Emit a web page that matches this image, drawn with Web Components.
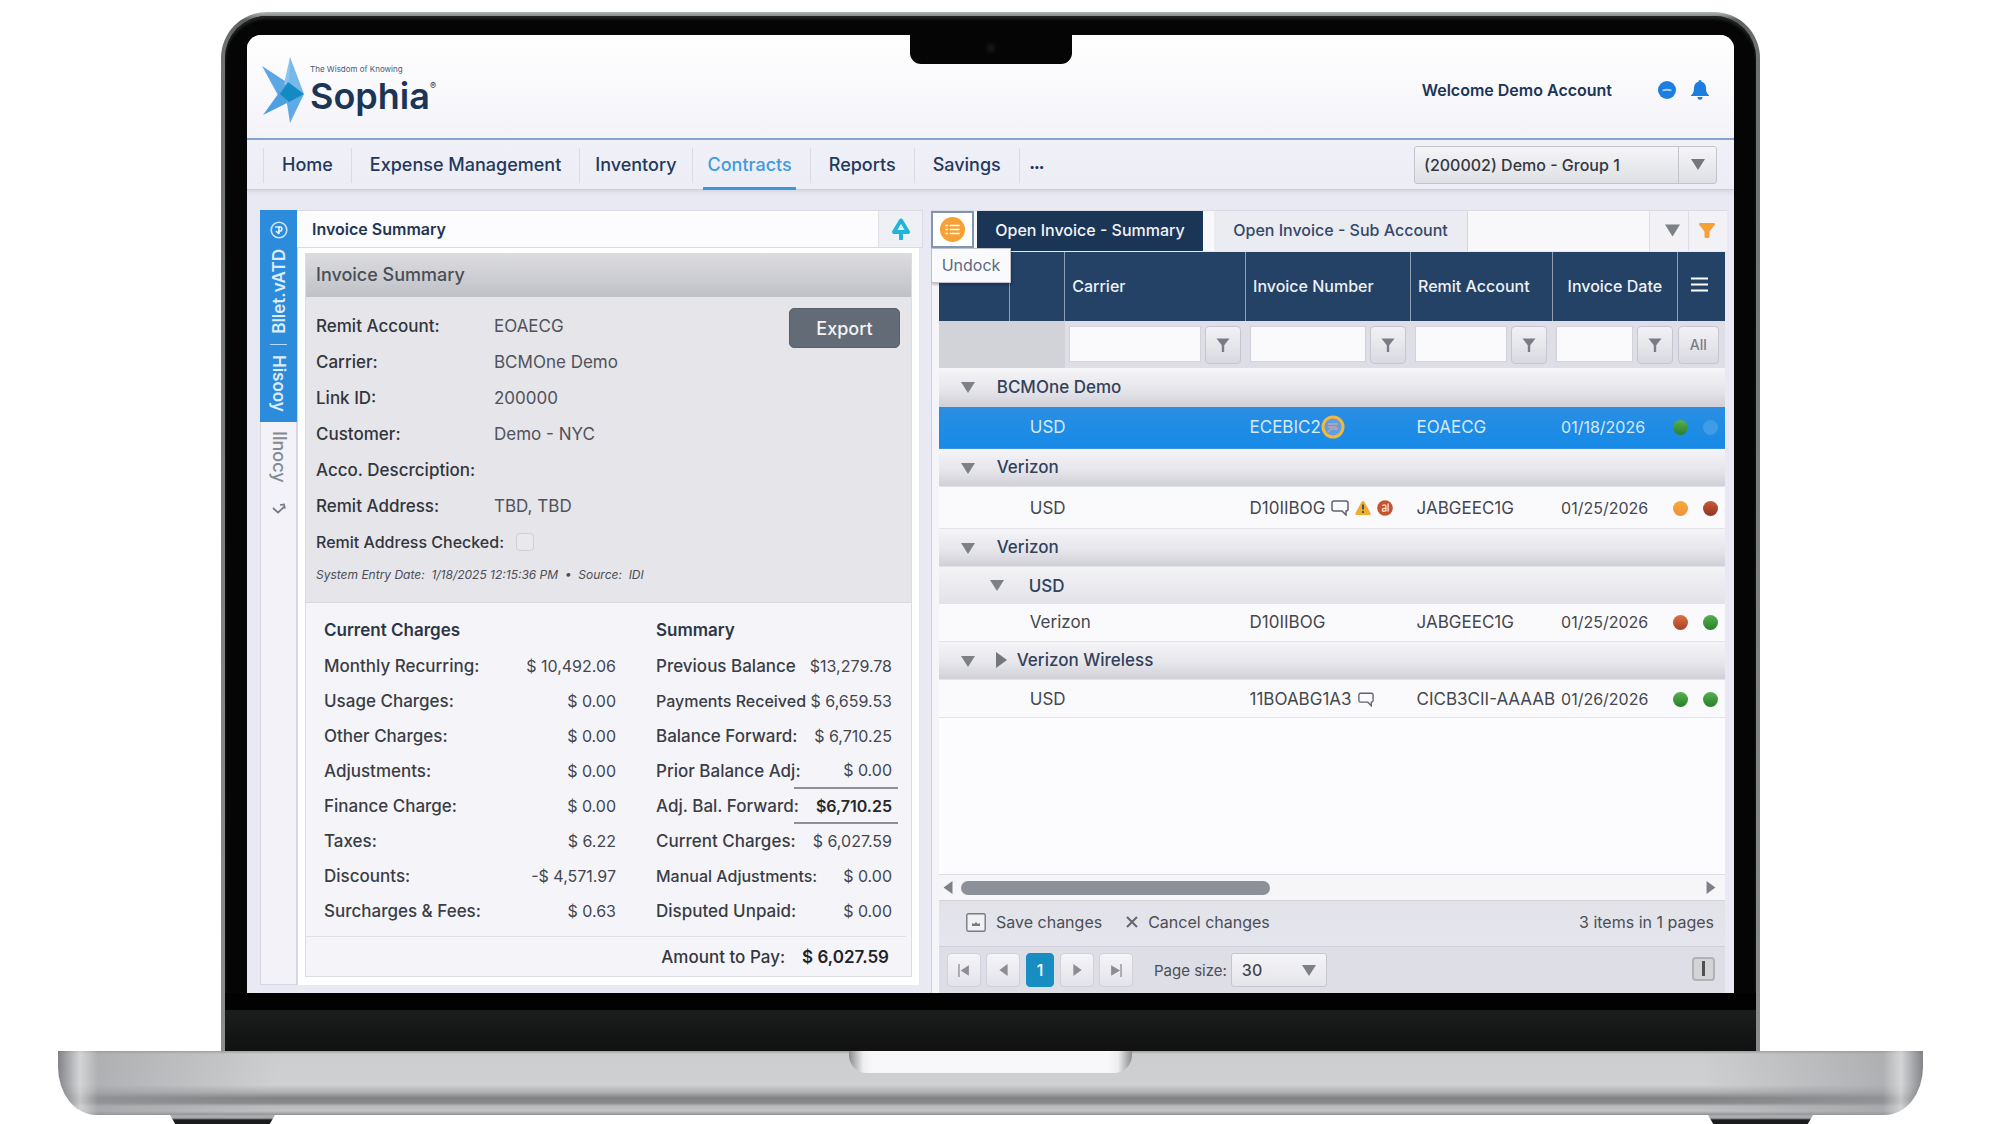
<!DOCTYPE html>
<html lang="en">
<head>
<meta charset="utf-8">
<title>Sophia – Invoice Summary</title>
<style>
  html, body { margin: 0; }
  body {
    box-sizing: border-box;
    min-height: 100vh;
    padding: 12px 77px 0 58px;
    display: flex;
    flex-direction: column;
    background: #fff;
    font-family: Inter, "Liberation Sans", sans-serif;
    font-size: 16px;
    color: #3a3d45;
  }
  laptop-frame { flex: 1; }
</style>
</head>
<body>
<laptop-frame>
  <app-header slot="screen" user="Welcome Demo Account"></app-header>
  <main-nav slot="screen"></main-nav>
  <work-area slot="screen">
    <side-tabs slot="left"></side-tabs>
    <invoice-summary slot="left"></invoice-summary>
    <invoice-grid slot="right"></invoice-grid>
  </work-area>
</laptop-frame>

<script>
const define = (name, css, html) => {
  const tpl = document.createElement('template');
  customElements.define(name, class extends HTMLElement {
    connectedCallback() {
      if (this.shadowRoot) return;
      tpl.innerHTML = `<style>:host,*{box-sizing:border-box}${css}</style>${typeof html === 'function' ? html(this) : html}`;
      this.attachShadow({ mode: 'open' }).append(tpl.content.cloneNode(true));
    }
  });
};

/* ---------- icons ---------- */
const ICONS = {
  down: ['0 0 14 11', '<path fill="currentColor" d="M0 0h14L7 11z"/>'],
  right: ['0 0 11 16', '<path fill="currentColor" d="M0 0l11 8L0 16z"/>'],
  left: ['0 0 11 16', '<path fill="currentColor" d="M11 0L0 8l11 8z"/>'],
  first: ['0 0 14 16', '<path fill="currentColor" d="M0 0h1.6v16H0zM13 1.500L3 8l10 6.500z"/>'],
  last: ['0 0 14 16', '<path fill="currentColor" d="M12.400 0H14v16h-1.600zM1 1.500L12 8 1 14.500z"/>'],
  funnel: ['0 0 14 14', '<path fill="currentColor" d="M.5.5h13L8.200 7.200V14H5.800V7.200z"/>'],
  funnelbig: ['0 0 16 15', '<path fill="currentColor" d="M1 0h14q1 0 1 1.500L10.500 8.500V13.500q0 1.500-1.500 1.500H7q-1.500 0-1.500-1.500V8.500L0 1.500Q0 0 1 0z"/>'],
  star: ['0 0 42 66', '<path fill="#5ba6e4" d="M0 9l26 17-9 14z"/><path fill="#77b8ea" d="M28 0l14 37-16-10z"/><path fill="#8cc3ee" d="M28 0l-6 27 5 3z"/><path fill="#4d9fe1" d="M1 58l18-25 10 11z"/><path fill="#5fa9e6" d="M42 37L28 66l-4-26z"/><path fill="#128bc2" d="M26 25l16 12-15 8-9-8z"/>'],
  minus: ['0 0 18 18', '<circle cx="9" cy="9" r="9" fill="#1c7fe0"/><path d="M4.500 9.500q4.500-1.500 9 0" stroke="#9fd0f7" stroke-width="1.800" fill="none"/>'],
  bell: ['0 0 18 20', '<path fill="#1c7fe0" d="M9 0c1 0 1.500.8 1.500 1.800C13.500 2.500 15 5 15 8c0 4 1 5.500 3 7.200V16H0v-.8C2 13.500 3 12 3 8c0-3 1.500-5.500 4.500-6.200C7.500.8 8 0 9 0zM6.500 17h5a2.500 2.800 0 0 1-5 0z"/>'],
  up: ['0 0 20 22', '<path fill="none" stroke="#1fb4d9" stroke-width="4" stroke-linejoin="round" d="M10 2.500L17 14H3z"/><path fill="#1fb4d9" d="M8 12h4v10H8z"/><path fill="#dff3f9" d="M10 6l3.500 6h-7z"/>'],
  list: ['0 0 28 28', '<circle cx="14" cy="14" r="14" fill="#f6a035"/><path d="M6 9.500h3M6 14h3M6 18.500h3M11 9.500h11M11 14h11M11 18.500h11" stroke="#fff" stroke-width="1.800"/>'],
  menu: ['0 0 17 15', '<path d="M0 1.500h17M0 7.500h17M0 13.500h17" stroke="#fff" stroke-width="2.200"/>'],
  chat: ['0 0 18 16', '<path fill="none" stroke="#5f636b" stroke-width="1.500" d="M3 1h12q2 0 2 2v6q0 2-2 2v4l-4-4H3q-2 0-2-2V3q0-2 2-2z"/>'],
  chatring: ['0 0 24 24', '<circle cx="12" cy="12" r="10" fill="#5f9fe0" stroke="#f4b73a" stroke-width="3"/><path fill="none" stroke="#a9a2bf" stroke-width="2" d="M7 9h10M7 12h9M7 17l3-3h7"/>'],
  warn: ['0 0 16 14', '<path fill="#f2ac2e" d="M8 0q1 0 1.500 1L15.500 12q.5 2-1 2h-13q-1.500 0-1-2L6.500 1Q7 0 8 0z"/><path stroke="#3c5a66" stroke-width="2" d="M8 3.500v5M8 10v2"/>'],
  badge: ['0 0 18 18', '<circle cx="9" cy="9" r="8.800" fill="#c4552f"/><path d="M6 6.500q2.500-2 4 0V13M10 9.500q-4-.5-4 1.800t4 .7M12.500 4v9" stroke="#fbe2d5" stroke-width="1.500" fill="none"/>'],
  save: ['0 0 20 19', '<rect x=".8" y=".8" width="18.400" height="17.400" rx="1.500" fill="#f1f1f4" stroke="#777b83" stroke-width="1.400"/><path fill="#777b83" d="M6 13v-3l2 1 2-2 2 2 2-1v3z"/>'],
  cross: ['0 0 12 12', '<path d="M1 1l10 10M11 1L1 11" stroke="#63676e" stroke-width="2"/>'],
  compass: ['0 0 18 18', '<circle cx="9" cy="9" r="7.800" fill="none" stroke="#cfe6fa" stroke-width="1.600"/><path d="M5 6h6q2 2 0 4H8M9 5v8M6 10l3 3" stroke="#e4f1fc" stroke-width="1.600" fill="none"/>'],
  hook: ['0 0 14 11', '<path d="M1 5l5 4.500 6-5.500M8 2l4-.5 1 4" stroke="#777b83" stroke-width="1.700" fill="none"/>']
};
customElements.define('ui-icon', class extends HTMLElement {
  connectedCallback() {
    if (this.shadowRoot) return;
    const [box, body] = ICONS[this.getAttribute('name')];
    const [, , w, h] = box.split(' ');
    this.attachShadow({ mode: 'open' }).innerHTML =
      `<style>:host{display:inline-flex;flex:none}svg{display:block}</style>
       <svg viewBox="${box}" width="${this.getAttribute('w') || w}" height="${this.getAttribute('h') || h}" aria-hidden="true">${body}</svg>`;
  }
});

define('status-dot', `
  :host{display:inline-block;width:15px;height:15px;border-radius:50%;flex:none;background:linear-gradient(#57b14d,#277f2c)}
  :host([tone=amber]){background:linear-gradient(#f3ad35,#ef8f40)}
  :host([tone=red]){background:linear-gradient(#c95a36,#8d3524)}
  :host([tone=flame]){background:linear-gradient(#df7040,#a8402a)}
  :host([tone=blue]){background:#419ce8}`, '');

/* ---------- laptop shell ---------- */
define('laptop-frame', `
  :host{display:flex;flex-direction:column;align-items:center}
  .lid{flex:1;width:calc(100% - 326px);display:flex;flex-direction:column;position:relative;
    border-radius:46px 46px 0 0;padding:4px 4px 0;
    background:linear-gradient(#b4b7b8,#5c5f60 8px,#6d7071 30px,#8a8c8e)}
  .bezel{flex:1;display:flex;flex-direction:column;background:#040504;border-radius:42px 42px 0 0;padding:19px 22px 0;box-shadow:inset 0 3px 3px #222524}
  .screen{flex:1;display:flex;flex-direction:column;overflow:hidden;border-radius:14px 14px 0 0;background:#e8e9f3}
  .notch{position:absolute;top:20px;left:50%;margin-left:-81px;width:162px;height:32px;background:#040504;border-radius:0 0 11px 11px;display:flex;justify-content:center;align-items:center}
  .cam{width:12px;height:12px;border-radius:50%;background:#141619;border:3px solid #0b0c0d}
  .chin{height:58px;margin:0 -22px;border-top:17px solid #020202;background:linear-gradient(#1c1d1d,#151716 50%,#101110)}
  .base{width:100%;height:64px;border-radius:4px 4px 38px 38px / 0 0 48px 48px;display:flex;justify-content:center;overflow:hidden;
    background:
      linear-gradient(90deg,#6f7175cc,#d4d6d8cc 22px,#9a9c9f99 40px,#0000 220px),
      linear-gradient(270deg,#6f7175cc,#d4d6d8cc 22px,#9a9c9f99 40px,#0000 220px),
      linear-gradient(#9d9fa0,#cbcdce 3px,#cfd0d2 34px,#b0b2b4 41px,#808284 47px,#86888a 52px,#b8babc 55px,#c0c2c4 60px,#8e9093)}
  .slot{width:283px;height:22px;border-radius:0 0 18px 18px;background:linear-gradient(90deg,#8a8c8e,#eeeef1 14px,#f8f8fa 24px,#f8f8fa calc(100% - 24px),#eeeef1 calc(100% - 14px),#8a8c8e)}
  .feet{width:100%;display:flex;justify-content:space-between;padding:0 110px 0 112px}
  .foot{width:105px;height:9px;background:linear-gradient(#a9abad 3px,#1b1c1d 5px);clip-path:polygon(0 0,100% 0,95% 100%,5% 100%)}
`, `
  <div class="lid"><div class="bezel"><div class="screen"><slot name="screen"></slot></div><div class="chin"></div></div>
  <div class="notch"><div class="cam"></div></div></div>
  <div class="base"><div class="slot"></div></div>
  <div class="feet"><div class="foot"></div><div class="foot"></div></div>`);

/* ---------- header ---------- */
define('app-header', `
  :host{display:flex;justify-content:space-between;align-items:center;height:105px;padding:7px 25px 0 15px;
    background:linear-gradient(#fff,#f4f3f9);border-bottom:2px solid #809fd2;color:#1b3557}
  .brand{display:flex;gap:6px}
  .words{display:flex;flex-direction:column;padding-top:6px}
  .tag{font-size:8px;line-height:12px;color:#4b5872}
  .name{display:flex;font-size:36px;line-height:42px;font-weight:600}
  sup{font-size:9px;line-height:12px;font-weight:400;padding-top:5px}
  .user{display:flex;align-items:center;font-size:16px;font-weight:600}
  .user span{margin-right:46px}
  .user ui-icon + ui-icon{margin-left:15px}
`, el => `
  <div class="brand"><ui-icon name="star"></ui-icon>
    <div class="words"><span class="tag">The Wisdom of Knowing</span><div class="name"><span>Sophia</span><sup>®</sup></div></div></div>
  <div class="user"><span>${el.getAttribute('user')}</span><ui-icon name="minus"></ui-icon><ui-icon name="bell"></ui-icon></div>`);

define('main-nav', `
  :host{display:flex;justify-content:space-between;align-items:center;height:50px;padding:0 17px 0 16px;
    background:linear-gradient(#f0f0f9,#ededf6);border-bottom:1px solid #cdced9;box-shadow:0 2px 4px #d4d5e0;position:relative}
  nav{display:flex;align-self:stretch}
  a{display:flex;align-items:center;position:relative;padding:0 18px 2px;margin:8px 0 6px;border-left:1px solid #dadbe4;font-size:18px;font-weight:500;color:#22395c;text-decoration:none}
  a.inv{padding:0 15px 2px}
  a.on{color:#3f9ae0;padding-left:15px}
  a.on::after{content:"";position:absolute;left:10px;right:14px;bottom:-7px;height:3px;background:#3c97df}
  a.more{padding:0 10px;font-size:10px;font-weight:700}
  .pick{position:relative;display:flex;align-items:center;width:303px;height:38px;border:1px solid #c3c4cb;border-radius:3px;background:linear-gradient(#f5f5f8,#dfe0e5)}
  select{appearance:none;width:100%;height:100%;border:0;background:none;padding:0 48px 0 9px;font:500 16px Inter,sans-serif;color:#34373e}
  .cap{position:absolute;right:0;top:0;bottom:0;width:38px;border-left:1px solid #c3c4cb;display:flex;align-items:center;justify-content:center;color:#73767d;pointer-events:none}
`, `
  <nav><a href="#">Home</a><a href="#">Expense Management</a><a href="#" class="inv">Inventory</a><a href="#" class="on">Contracts</a><a href="#">Reports</a><a href="#">Savings</a><a href="#" class="more" aria-label="More">•••</a></nav>
  <div class="pick"><select aria-label="Group"><option>(200002) Demo - Group 1</option></select><span class="cap"><ui-icon name="down"></ui-icon></span></div>`);

define('work-area', `
  :host{flex:1;display:flex;gap:8px;padding:20px 7px 0 13px}
  .l{flex:663 1 0;min-width:0;display:flex;margin-bottom:8px}
  .r{flex:796 1 0;min-width:0;display:flex}
`, `<div class="l"><slot name="left"></slot></div><div class="r"><slot name="right"></slot></div>`);

/* ---------- vertical tabs ---------- */
define('side-tabs', `
  :host{display:flex;flex-direction:column;width:37px;flex:none;background:#f2f2f8;border:1px solid #d5d6df;border-top:0}
  button{border:0;margin:0 -1px;padding:0;display:flex;flex-direction:column;align-items:center;background:none;font:500 18px/20px Inter,sans-serif;color:#858991}
  .v{writing-mode:vertical-rl}
  .flip{writing-mode:vertical-rl;transform:rotate(180deg)}
  .bar{width:17px;height:1px;background:#b9d9f4}
  .on{height:212px;padding-top:11px;gap:10px;background:#2c8bdb;color:#dcecfa;font-size:17px;font-weight:600}
  .off{padding-top:9px;gap:20px}
`, `
  <button class="on"><ui-icon name="compass"></ui-icon><span class="flip">Bllet.vATD</span><i class="bar"></i><span class="v">Hisooy</span></button>
  <button class="off"><span class="v">Ilnocy</span><ui-icon name="hook"></ui-icon></button>`);

/* ---------- invoice summary ---------- */
const CHARGES = [['Monthly Recurring:','$ 10,492.06'],['Usage Charges:','$ 0.00'],['Other Charges:','$ 0.00'],['Adjustments:','$ 0.00'],['Finance Charge:','$ 0.00'],['Taxes:','$ 6.22'],['Discounts:','-$ 4,571.97'],['Surcharges & Fees:','$ 0.63']];
const SUMMARY = [['Previous Balance','$13,279.78'],['Payments Received','$ 6,659.53','long'],['Balance Forward:','$ 6,710.25'],['Prior Balance Adj:','$ 0.00'],['Adj. Bal. Forward:','$6,710.25','total'],['Current Charges:','$ 6,027.59'],['Manual Adjustments:','$ 0.00','long'],['Disputed Unpaid:','$ 0.00']];
const rows = list => list.map(([k, v, c = '']) => `<tr class="${c}"><th scope="row">${k.replace('&', '&amp;')}</th><td>${v}</td></tr>`).join('');
define('invoice-summary', `
  :host{flex:1;min-width:0;display:flex;flex-direction:column}
  header{display:flex;height:38px;background:#fcfcfe;border:1px solid #d9dae2;border-left:0}
  h2{flex:1;margin:0;padding-left:15px;font-size:16px;line-height:36px;font-weight:600;color:#1f3557}
  header button{width:44px;padding:0;border:0;border-left:1px solid #e0e1e8;background:#eff0f6;display:flex;align-items:center;justify-content:center}
  .frame{flex:1;display:flex;flex-direction:column;margin-right:4px;padding:5px 7px 8px;background:#fff;border-left:1px solid #d5d6df}
  .box{flex:1;display:flex;flex-direction:column;border:1px solid #dcdde4;border-top:0;background:#f5f5f9}
  h3{margin:0;padding-left:10px;font-size:18px;line-height:44px;font-weight:500;color:#4a4e57;background:linear-gradient(#dddde1,#bfc1c6)}
  .details{display:flex;align-items:flex-start;background:#e5e5ea;border-bottom:1px solid #d8d9df;padding:11px 11px 0 10px;height:306px}
  .form{flex:1;display:grid;grid-template-columns:178px 1fr;grid-auto-rows:36px;align-items:center;font-size:17px}
  .form b,.form label{font-weight:500;color:#32353c}
  .form span{color:#50535b}
  .check{grid-column:1/3;display:flex;align-items:center;gap:12px;font-size:16px}
  input{appearance:none;margin:0;width:18px;height:18px;border:1px solid #cfd0d6;border-radius:4px;background:#e9e9ed}
  .form em{grid-column:1/3;align-self:start;font-size:12px;line-height:30px;color:#4b4e55;white-space:pre}
  .export{width:111px;height:40px;border:1px solid #59616c;border-radius:5px;background:#636b77;color:#f3f4f6;font:500 18px Inter,sans-serif}
  .money{display:flex;justify-content:space-between;padding:10px 13px 0 18px;height:333px}
  table{border-collapse:collapse;font-size:17px;height:max-content}
  .c{width:292px}.s{width:242px;table-layout:fixed}
  th,td,caption{padding:0;height:35px;line-height:20px;white-space:nowrap}
  caption{text-align:left;font-weight:600;color:#2b3648;line-height:35px}
  th{text-align:left;font-weight:500;color:#3a3d45}
  td{text-align:right;font-size:16px;font-weight:400;color:#43464e}
  .s th{width:138px}
  .s td{padding-right:6px}
  .s tr.long th{font-size:16px}
  .s tr.total td{font-weight:600;color:#24272d;border-top:2px solid #8d9096;border-bottom:2px solid #8d9096}
  .pay{display:flex;justify-content:flex-end;align-items:center;gap:17px;flex:1;margin-right:5px;padding-right:17px;border-top:1px solid #dfe0e6;font-size:17px;font-weight:500;color:#34373e}
  .pay strong{font-weight:600;color:#1f2228}
`, `
  <header><h2>Invoice Summary</h2><button aria-label="Collapse"><ui-icon name="up"></ui-icon></button></header>
  <div class="frame"><div class="box">
    <h3>Invoice Summary</h3>
    <div class="details"><div class="form">
      <b>Remit Account:</b><span>EOAECG</span><b>Carrier:</b><span>BCMOne Demo</span>
      <b>Link ID:</b><span>200000</span><b>Customer:</b><span>Demo - NYC</span>
      <b>Acco. Descrciption:</b><span></span><b>Remit Address:</b><span>TBD, TBD</span>
      <div class="check"><label for="rac">Remit Address Checked:</label><input type="checkbox" id="rac"></div>
      <em>System Entry Date:  1/18/2025 12:15:36 PM  •  Source:  IDI</em>
    </div><button class="export">Export</button></div>
    <div class="money">
      <table class="c"><caption>Current Charges</caption>${rows(CHARGES)}</table>
      <table class="s"><caption>Summary</caption>${rows(SUMMARY)}</table>
    </div>
    <div class="pay"><span>Amount to Pay:</span><strong>$ 6,027.59</strong></div>
  </div></div>`);

/* ---------- invoice grid ---------- */
const filterCell = name => `<td><div class="f"><input type="text" aria-label="Filter ${name}"><button aria-label="Apply ${name} filter"><ui-icon name="funnel"></ui-icon></button></div></td>`;
const group = (label, pre = '') => `<tr class="g"><td class="mid"><ui-icon name="down"></ui-icon></td><td colspan="6"><div class="gl">${pre}${label}</div></td></tr>`;
const dataRow = (cls, name, inv, icons, remit, date, a, b) => `<tr class="${cls}"><td></td><td colspan="2"><div class="nm">${name}</div></td>
  <td><div class="iv">${inv}${icons}</div></td><td class="rm">${remit}</td><td class="dt">${date}</td>
  <td><div class="dots"><status-dot tone="${a}"></status-dot><status-dot tone="${b}"></status-dot></div></td></tr>`;
define('invoice-grid', `
  :host{flex:1;min-width:0;display:flex;flex-direction:column;position:relative}
  .tabs{display:flex;height:42px;background:#f8f8fb;border-top:1px solid #d9dae2;border-bottom:1px solid #e8e9f0}
  .tabs button{border:0;padding:0 0 2px;font:500 16px Inter,sans-serif;white-space:nowrap}
  .tabs .dock{width:43px;height:37px;padding:0;background:#fff;border:2px solid #8095b8;display:flex;align-items:center;justify-content:center}
  .tabs .on{width:226px;margin-left:3px;background:#1b3557;color:#f2f4f7}
  .tabs .off{width:254px;margin:0 auto 0 11px;background:#ebebf2;border-right:1px solid #d5d6df;color:#33486a}
  .tabs .t{width:39px;padding:0 0 2px 6px;border-left:1px solid #dcdde5;background:#f1f1f6;display:flex;align-items:center;justify-content:center;color:#82858c}
  .tabs .t.o{color:#f6a035;padding:0 3px 2px 0}
  .tip{position:absolute;left:0;top:38px;width:80px;height:35px;background:#fafafc;border:1px solid #bdbfc9;box-shadow:1px 2px 2px #0003;font-size:16px;line-height:32px;text-align:center;color:#5a6a84}
  .panel{flex:1;display:flex;flex-direction:column;margin:0 2px 0 1px;border-left:7px solid #f4f4f9;box-shadow:-1px 0 #cfd0da;background:#fcfcfe}
  table{width:100%;border-collapse:collapse;table-layout:fixed;font-size:17px}
  th,td{padding:0;white-space:nowrap;text-align:left}
  thead th{height:69px;background:#244166;color:#eef1f5;font-size:16px;font-weight:500;border-left:1px solid #8e9db2;padding:0 0 2px 7px}
  thead th:first-child{border-left:0}
  thead th:nth-child(6){padding-left:15px}
  thead th.m{padding-left:13px}
  .flt td{height:47px;background:#dedfe6}
  .flt td.blank{background:#d2d3d8}
  .f{display:flex;gap:4px;padding:0 5px 0 4px}
  .f input{flex:1;min-width:0;height:36px;border:1px solid #d2d3da;background:#fafafc;padding:0 8px;font:16px Inter,sans-serif}
  .f button,.all{width:36px;height:38px;border:1px solid #c6c7ce;border-radius:4px;padding:0;background:linear-gradient(#f2f2f6,#d9dae0);display:flex;align-items:center;justify-content:center;color:#797c84}
  .all{width:41px;font:500 14px Inter,sans-serif}
  .g td{height:39px;padding-bottom:2px;background:linear-gradient(#f5f5f8,#e6e6eb 55%,#cfd0d6);color:#33415a;font-weight:500}
  .g.sub td{height:37px;padding:0;background:linear-gradient(#f3f3f6,#e2e2e8)}
  .g td.mid{padding-left:22px}
  ui-icon[name=down]{color:#7d8087}
  .mid ui-icon{vertical-align:middle}
  .gl{display:flex;align-items:center;gap:10px;margin-left:-13px}
  .gl.in{gap:25px;margin-left:-20px}
  .gl ui-icon[name=right]{color:#73767d;margin-left:-1px}
  .d td{height:41px;background:#fafafc;color:#44474f;border-bottom:1px solid #e3e4ea}
  .d.t td{height:37px}
  .d.low td{padding-top:2px}
  .d.sel td{background:linear-gradient(#2a8ee3,#168ae6);color:#d6e9fb;border-bottom-color:#3b93e0}
  .nm{padding-left:20px}
  .iv{display:flex;align-items:center;gap:6px;padding-left:4px}
  .sel .iv{gap:0}
  .d td.rm{padding-left:6px}
  .d td.dt{padding-left:9px;font-size:16px}
  .dots{display:flex;gap:15px;margin-left:-5px}
  .scroll{margin-top:auto;display:flex;align-items:center;height:26px;padding:0 9px 0 4px;border-top:1px solid #dddee5;background:#f6f6f9;color:#7d8087}
  .track{flex:1;margin:0 9px 0 8px}
  .thumb{width:42%;height:14px;border-radius:7px;background:#8c9098}
  .acts{display:flex;align-items:center;height:47px;padding:0 11px 3px 27px;border-top:1px solid #d3d4db;border-bottom:1px solid #cfd0d8;background:linear-gradient(#e2e2e8,#e5e5ee);font-size:16px;color:#4b4e56}
  .acts button{display:flex;align-items:center;gap:10px;border:0;background:none;padding:0;margin-right:24px;font:400 16px Inter,sans-serif;color:#4b4e56}
  .acts span{margin-left:auto}
  .pager{display:flex;align-items:center;gap:5px;height:46px;padding:0 10px 0 8px;background:#dddee6;font-size:15px;color:#4b4e56}
  .pager button{width:34px;height:34px;padding:0;border:1px solid #d0d1d9;border-radius:4px;background:linear-gradient(#f4f4f8,#e3e4ea);display:flex;align-items:center;justify-content:center;color:#8a8d94}
  .pager .cur{width:28px;margin:0 1px;background:#178dc2;border-color:#178dc2;color:#fff;font:500 16px Inter,sans-serif}
  .pager label{margin-left:16px}
  .ps{position:relative;display:flex;width:96px;height:34px;margin-left:-1px;border:1px solid #c6c7ce;border-radius:3px;background:linear-gradient(#f5f5f8,#e4e5ea)}
  .ps select{appearance:none;width:100%;border:0;background:none;padding:0 10px;font:500 16px Inter,sans-serif;color:#43464e}
  .ps ui-icon{position:absolute;right:10px;top:11px;pointer-events:none}
  .pager .end{width:23px;height:24px;margin:0 0 3px auto;border:2px solid #b0b2b6;background:#d3d4d6}
  .end i{width:3px;height:15px;background:#4d5154}
`, `
  <div class="tabs"><button class="dock" aria-label="Undock panel"><ui-icon name="list" w="27" h="25"></ui-icon></button>
    <button class="on">Open Invoice - Summary</button><button class="off">Open Invoice - Sub Account</button>
    <button class="t" aria-label="Filter menu"><ui-icon name="down" w="15" h="13"></ui-icon></button><button class="t o" aria-label="Active filter"><ui-icon name="funnelbig"></ui-icon></button></div>
  <div class="panel">
    <table>
      <colgroup><col style="width:9%"><col style="width:7%"><col style="width:23%"><col style="width:21%"><col style="width:18%"><col style="width:16%"><col></colgroup>
      <thead><tr><th></th><th></th><th>Carrier</th><th>Invoice Number</th><th>Remit Account</th><th>Invoice Date</th><th class="m"><ui-icon name="menu"></ui-icon></th></tr></thead>
      <tbody>
        <tr class="flt"><td colspan="2" class="blank"></td>${['carrier', 'invoice number', 'remit account', 'invoice date'].map(filterCell).join('')}<td><button class="all">All</button></td></tr>
        ${group('BCMOne Demo')}
        ${dataRow('d sel', 'USD', 'ECEBIC2', '<ui-icon name="chatring"></ui-icon>', 'EOAECG', '01/18/2026', 'green', 'blue')}
        ${group('Verizon')}
        ${dataRow('d low', 'USD', 'D10IIBOG', '<ui-icon name="chat"></ui-icon><ui-icon name="warn"></ui-icon><ui-icon name="badge" w="16" h="16"></ui-icon>', 'JABGEEC1G', '01/25/2026', 'amber', 'red')}
        ${group('Verizon')}
        <tr class="g sub"><td></td><td colspan="6"><div class="gl in"><ui-icon name="down"></ui-icon>USD</div></td></tr>
        ${dataRow('d t', 'Verizon', 'D10IIBOG', '', 'JABGEEC1G', '01/25/2026', 'flame', 'green')}
        ${group('Verizon Wireless', '<ui-icon name="right"></ui-icon>')}
        ${dataRow('d t low', 'USD', '11BOABG1A3', '<ui-icon name="chat" w="16" h="15"></ui-icon>', 'CICB3CII-AAAAB', '01/26/2026', 'green', 'green')}
      </tbody>
    </table>
    <div class="scroll"><ui-icon name="left" w="10" h="13"></ui-icon><div class="track"><div class="thumb"></div></div><ui-icon name="right" w="10" h="13"></ui-icon></div>
    <div class="acts"><button><ui-icon name="save"></ui-icon>Save changes</button><button><ui-icon name="cross"></ui-icon>Cancel changes</button><span>3 items in 1 pages</span></div>
    <div class="pager"><button aria-label="First page"><ui-icon name="first" h="13"></ui-icon></button><button aria-label="Previous page"><ui-icon name="left" w="9" h="12"></ui-icon></button><button class="cur">1</button><button aria-label="Next page"><ui-icon name="right" w="9" h="12"></ui-icon></button><button aria-label="Last page"><ui-icon name="last" h="13"></ui-icon></button>
      <label for="ps">Page size:</label><div class="ps"><select id="ps"><option>30</option></select><ui-icon name="down"></ui-icon></div><button class="end" aria-label="Toggle column panel"><i></i></button></div>
  </div>
  <div class="tip" role="tooltip">Undock</div>`);
</script>
</body>
</html>
